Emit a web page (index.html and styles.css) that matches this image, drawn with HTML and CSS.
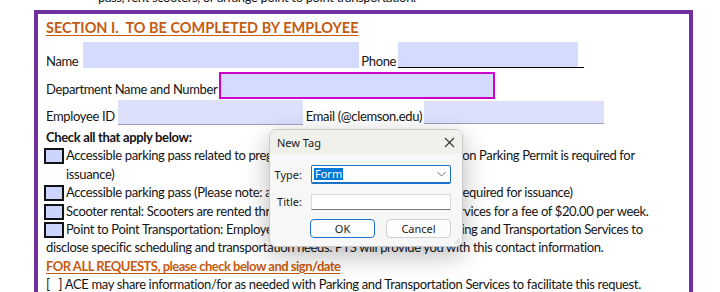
FILE: index.html
```html
<!DOCTYPE html>
<html>
<head>
<meta charset="utf-8">
<link rel="stylesheet" href="styles.css">
</head>
<body>
<div class="topline">pass, rent scooters, or arrange point to point transportation.</div>
<div class="frame">
  <div class="heading">SECTION I.&nbsp; TO BE COMPLETED BY EMPLOYEE</div>
  <div class="row r-name">
    <span class="lbl">Name</span>
    <span class="field f-name"></span>
    <span class="lbl lbl-phone">Phone</span>
    <span class="uline"><span class="field f-phone"></span></span>
  </div>
  <div class="row r-dept">
    <span class="lbl">Department Name and Number</span>
    <span class="field f-dept"></span>
  </div>
  <div class="row r-emp">
    <span class="lbl">Employee ID</span>
    <span class="field f-emp"></span>
    <span class="lbl lbl-email">Email (@clemson.edu)</span>
    <span class="field f-email"></span>
  </div>
  <div class="lines">
    <div class="bold">Check all that apply below:</div>
    <div class="check"><span class="box"></span>Accessible parking pass related to pregnancy (Please note: an active Clemson Parking Permit is required for</div>
    <div class="indent">issuance)</div>
    <div class="check"><span class="box"></span>Accessible parking pass (Please note: an active Clemson Parking Permit is required for issuance)</div>
    <div class="check"><span class="box"></span>Scooter rental: Scooters are rented through Parking and Transportation Services for a fee of $20.00 per week.</div>
    <div class="check"><span class="box"></span>Point to Point Transportation: Employees will need to directly contact Parking and Transportation Services to</div>
    <div>disclose specific scheduling and transportation needs. PTS will provide you with this contact information.</div>
    <div class="req">FOR ALL REQUESTS, please check below and sign/date</div>
    <div>[&nbsp;&nbsp; ] ACE may share information/for as needed with Parking and Transportation Services to facilitate this request.</div>
  </div>
</div>

<div class="dialog">
  <div class="dlg-title">
    <span>New Tag</span>
    <svg class="dlg-close" width="11" height="11" viewBox="0 0 11 11"><path d="M1 1 L10 10 M10 1 L1 10" stroke="#333" stroke-width="1.1" fill="none"/></svg>
  </div>
  <div class="dlg-body">
    <span class="dlg-lbl">Type:</span>
    <div class="dlg-select"><span class="sel-text">Form</span>
      <svg class="chev" width="9" height="6" viewBox="0 0 9 6"><path d="M0.5 1 L4.5 5 L8.5 1" stroke="#777" stroke-width="1" fill="none"/></svg>
    </div>
    <span class="dlg-lbl">Title:</span>
    <div class="dlg-input"></div>
    <div class="dlg-btns">
      <div class="btn btn-ok">OK</div>
      <div class="btn">Cancel</div>
    </div>
  </div>
  <svg class="grip" width="6" height="6" viewBox="0 0 6 6"><circle cx="5" cy="1" r="0.6" fill="#aaa"/><circle cx="3" cy="3" r="0.6" fill="#aaa"/><circle cx="5" cy="3" r="0.6" fill="#aaa"/><circle cx="1" cy="5" r="0.6" fill="#aaa"/><circle cx="3" cy="5" r="0.6" fill="#aaa"/><circle cx="5" cy="5" r="0.6" fill="#aaa"/></svg>
</div>
</body>
</html>
```

FILE: styles.css
```css
html, body {
  margin: 0;
  padding: 0;
  background: #ffffff;
  overflow: hidden;
}
body {
  font-family: Lato, "Liberation Sans", sans-serif;
  font-size: 13px;
  letter-spacing: -0.35px;
  color: #141414;
  width: 720px;
  height: 292px;
  position: relative;
}
.topline {
  margin-top: -12px;
  height: 22px;
  line-height: 19px;
  padding-left: 98px;
  white-space: nowrap;
}
.frame {
  margin-left: 34px;
  width: 643px;
  height: 300px;
  border: 4px solid #7030a0;
  border-bottom: none;
  padding: 4px 0 0 8px;
  white-space: nowrap;
  overflow: hidden;
}
.heading {
  font-weight: 700;
  font-size: 14.5px;
  letter-spacing: 0;
  line-height: 20px;
  color: #c55a11;
  text-decoration: underline;
  text-underline-offset: 2px;
}
.row {
  display: flex;
  align-items: flex-end;
}
.lbl {
  line-height: 18px;
}
.field {
  display: block;
  background: #d5dbff;
}
.r-name {
  margin-top: 4px;
  height: 26px;
}
.r-name .lbl { margin-bottom: -2px; }
.f-name {
  margin-left: 5px;
  width: 276px;
  height: 26px;
}
.lbl-phone { margin-left: 2px; }
.uline {
  display: block;
  margin-left: 2px;
  width: 186px;
  border-bottom: 1px solid #000;
}
.f-phone {
  width: 180px;
  height: 25px;
}
.r-dept {
  margin-top: 4px;
  height: 27px;
}
.r-dept .lbl { margin-bottom: 1px; }
.f-dept {
  margin-left: 2px;
  width: 272px;
  height: 23px;
  border: 2px solid #cc00cc;
}
.r-emp {
  margin-top: 1px;
  height: 25px;
}
.f-emp {
  margin-left: 3px;
  width: 185px;
  height: 24px;
  background: #dce0fa;
  border-bottom: 1px solid #9aa0c8;
}
.lbl-email { margin-left: 3px; }
.f-email {
  margin-left: 2px;
  margin-bottom: 1px;
  width: 180px;
  height: 22px;
  background: #dce0fa;
  border-bottom: 1px solid #9aa0c8;
}
.lines {
  margin-top: 3px;
  line-height: 18.4px;
}
.bold { font-weight: 700; }
.check { margin-left: -2px; }
.box {
  display: inline-block;
  box-sizing: border-box;
  width: 20px;
  height: 16px;
  margin-right: 2px;
  vertical-align: -4px;
  background: #ccd5ff;
  border: 2px solid #111;
}
.indent { padding-left: 20px; }
.req {
  font-weight: 700;
  letter-spacing: -0.5px;
  color: #c55a11;
  text-decoration: underline;
  text-underline-offset: 2px;
}

/* dialog */
.dialog {
  position: absolute;
  left: 269px;
  top: 129px;
  width: 194px;
  height: 118px;
  box-sizing: border-box;
  border: 1px solid #c9c9c9;
  border-radius: 7px;
  background: #f7f7f7;
  box-shadow: 0 8px 26px rgba(0, 0, 0, 0.28);
  font-family: "Noto Sans", "Open Sans", sans-serif;
  font-size: 11px;
  letter-spacing: 0;
  color: #1b1b1b;
  overflow: hidden;
}
.dlg-title {
  height: 23px;
  display: flex;
  align-items: center;
  justify-content: space-between;
  padding: 1px 7px 0 7px;
  background: #f1f1ec;
}
.dlg-body {
  display: grid;
  grid-template-columns: 32px 140px;
  column-gap: 9px;
  row-gap: 10px;
  align-items: center;
  padding-top: 11px;
}
.dlg-lbl {
  text-align: right;
  line-height: 14px;
}
.dlg-select {
  box-sizing: border-box;
  height: 19px;
  border: 1px solid #1a73c8;
  border-bottom-width: 2px;
  border-radius: 2px;
  background: #ffffff;
  display: flex;
  align-items: center;
  justify-content: space-between;
  padding: 0 4px 0 2px;
}
.sel-text {
  background: #0078d7;
  color: #ffffff;
  line-height: 12px;
  padding: 0 1px;
}
.dlg-input {
  box-sizing: border-box;
  height: 16px;
  background: #ffffff;
  border: 1px solid #d8d8d8;
  border-bottom: 1px solid #7a7a7a;
}
.dlg-btns {
  grid-column: 2;
  display: flex;
  gap: 11px;
  margin-left: -1px;
  margin-top: -1px;
}
.btn {
  box-sizing: border-box;
  width: 65px;
  height: 19px;
  border: 1px solid #d0d0d0;
  border-radius: 4px;
  background: #fdfdfd;
  text-align: center;
  line-height: 17px;
}
.btn-ok { border-color: #1a73c8; }
.grip {
  position: absolute;
  right: 2px;
  bottom: 2px;
}
```
